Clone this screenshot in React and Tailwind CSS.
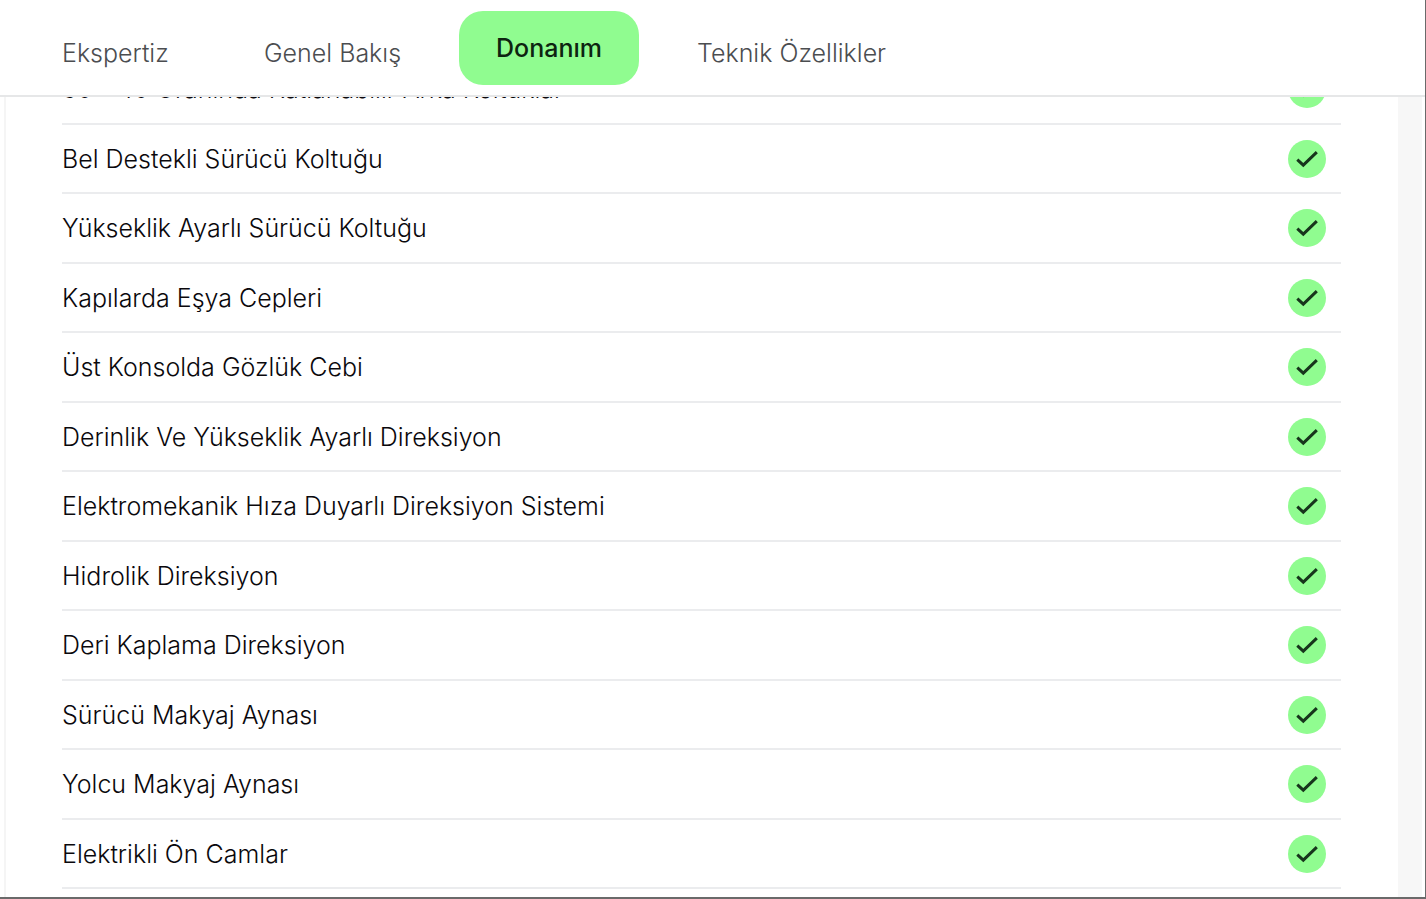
const tabs = ["Ekspertiz", "Genel Bakış", "Donanım", "Teknik Özellikler"];

const features = [
  "60 - 40 Oranında Katlanabilir Arka Koltuklar",
  "Bel Destekli Sürücü Koltuğu",
  "Yükseklik Ayarlı Sürücü Koltuğu",
  "Kapılarda Eşya Cepleri",
  "Üst Konsolda Gözlük Cebi",
  "Derinlik Ve Yükseklik Ayarlı Direksiyon",
  "Elektromekanik Hıza Duyarlı Direksiyon Sistemi",
  "Hidrolik Direksiyon",
  "Deri Kaplama Direksiyon",
  "Sürücü Makyaj Aynası",
  "Yolcu Makyaj Aynası",
  "Elektrikli Ön Camlar",
];

function CheckBadge() {
  return (
    <svg viewBox="0 0 38 38" className="size-[38px] shrink-0" role="img" aria-label="Var">
      <circle cx="19" cy="19" r="19" fill="#90fc90" />
      <path d="M9.3 19.6 L15.3 25.2 L28.8 12.2" fill="none" stroke="#17351c" strokeWidth="3" />
    </svg>
  );
}

function Tab({ label, active }) {
  return active ? (
    <button
      type="button"
      aria-current="true"
      className="mb-[10px] flex h-[74px] items-center rounded-3xl bg-[#90fc90] px-[37px] font-medium text-[#0d2410]"
    >
      {label}
    </button>
  ) : (
    <button type="button" className="flex h-[84px] items-center text-[#4b4d50]">
      {label}
    </button>
  );
}

export default function App() {
  return (
    <div className="flex h-screen flex-col overflow-hidden border-r border-b-2 border-[#6a6a6a] bg-white font-['Inter',sans-serif] text-[25px] leading-8 font-light">
      <header className="shrink-0 border-b-2 border-[#e6e7e8] bg-white">
        <nav className="flex h-[95px] items-end pl-[62px]">
          <div className="w-[202px]"><Tab label={tabs[0]} /></div>
          <div className="w-[195px]"><Tab label={tabs[1]} /></div>
          <div className="w-[238px]"><Tab label={tabs[2]} active /></div>
          <Tab label={tabs[3]} />
        </nav>
      </header>
      <main className="mr-[3px] ml-1 flex min-h-0 flex-1 border-l-2 border-[#f5f5f5] bg-[#f7f7f7] pr-6">
        <section className="flex flex-1 flex-col justify-end overflow-hidden bg-white pr-[57px] pb-2 pl-[56px]">
          <ul>
            {features.map((name) => (
              <li
                key={name}
                className="flex items-center justify-between border-b-2 border-[#ebecee] pr-[15px] text-[#0a080c] odd:h-[70px] even:h-[69px]"
              >
                <span>{name}</span>
                <CheckBadge />
              </li>
            ))}
          </ul>
        </section>
      </main>
    </div>
  );
}
